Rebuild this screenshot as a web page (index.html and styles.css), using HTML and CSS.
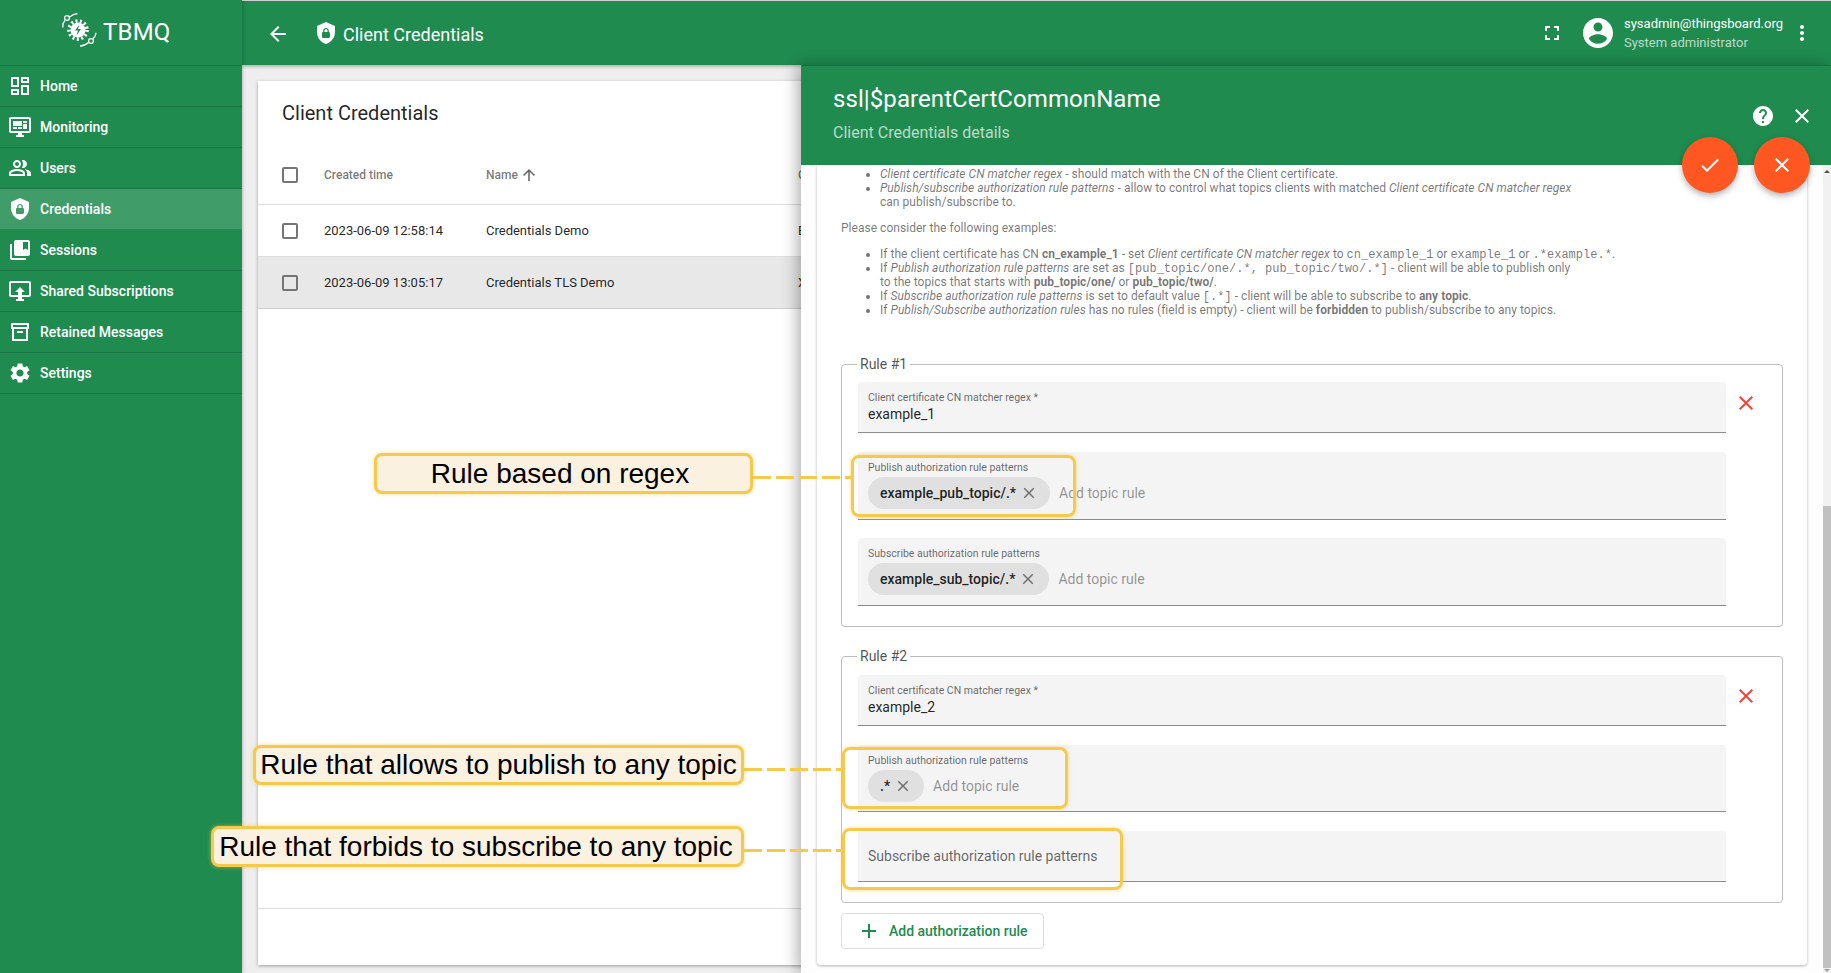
FILE: index.html
```html
<!DOCTYPE html>
<html lang="en">
<head>
    <meta charset="UTF-8">
    <meta name="viewport" content="width=device-width, initial-scale=1.0">
    <title>TBMQ - Client Credentials</title>
    <link rel="stylesheet" href="styles.css">
</head>
<body>
    <aside class="sidebar">
        <div class="logo">
            <svg class="logo-mark" viewBox="0 0 36 36" fill="none" stroke="#fff" stroke-width="1.3">
                <circle cx="5" cy="6" r="2.4"/>
                <circle cx="29" cy="29" r="2.4"/>
                <path d="M3 8.5c-2 2-2.500 4.500-2 7"/>
                <path d="M7.500 5c2.500-2 5-3.200 8-3.500"/>
                <path d="M31 26.800c1.800-1.800 3-3.800 3-6"/>
                <path d="M26.500 30.500c-2.500 2.300-5.500 3.500-8.500 3.500"/>
                <circle cx="16" cy="18" r="7.500" fill="#fff" stroke="none"/>
                <circle cx="16" cy="18" r="9" stroke-width="3.600" stroke-dasharray="2 2.400"/>
                <path d="M17.500 12.500l-4.500 6h3l-1.500 5 4.500-6.500h-3z" fill="#1f8b4f" stroke="none"/>
            </svg>
            <span class="logo-text">TBMQ</span>
        </div>
        <nav>
            <a class="nav-item">
                <svg class="icon" viewBox="0 0 24 24"><path d="M19 5v2h-4V5h4M9 5v6H5V5h4m10 8v6h-4v-6h4M9 17v2H5v-2h4M21 3h-8v6h8V3zM11 3H3v10h8V3zm10 8h-8v10h8V11zm-10 4H3v6h8v-6z"/></svg>
                Home
            </a>
            <a class="nav-item">
                <svg class="icon" viewBox="0 0 24 24"><path d="M21,16V4H3V16H21M21,2A2,2 0 0,1 23,4V16A2,2 0 0,1 21,18H14V20H16V22H8V20H10V18H3C1.89,18 1,17.1 1,16V4C1,2.89 1.89,2 3,2H21M5,6H14V11H5V6M15,6H19V8H15V6M19,9V14H15V9H19M5,12H9V14H5V12M10,12H14V14H10V12Z"/></svg>
                Monitoring
            </a>
            <a class="nav-item">
                <svg class="icon" viewBox="0 0 24 24"><path d="M16.67 13.13C18.04 14.06 19 15.32 19 17v3h4v-3c0-2.18-3.57-3.47-6.33-3.87zM15 12c2.21 0 4-1.79 4-4s-1.79-4-4-4c-.47 0-.91.1-1.33.24C14.5 5.27 15 6.58 15 8s-.5 2.73-1.33 3.76c.42.14.86.24 1.33.24zM9 12c2.21 0 4-1.79 4-4s-1.79-4-4-4-4 1.79-4 4 1.79 4 4 4zm0-6c1.1 0 2 .9 2 2s-.9 2-2 2-2-.9-2-2 .9-2 2-2zM9 13c-2.67 0-8 1.34-8 4v3h16v-3c0-2.66-5.33-4-8-4zm6 5H3v-.99C3.2 16.29 6.3 15 9 15s5.8 1.29 6 2v1z"/></svg>
                Users
            </a>
            <a class="nav-item active">
                <svg class="icon" viewBox="0 0 24 24"><path d="M12,1L3,5V11C3,16.55 6.84,21.74 12,23C17.16,21.74 21,16.55 21,11V5L12,1M12,7C13.4,7 14.8,8.1 14.8,9.5V11C15.4,11 16,11.6 16,12.3V15.8C16,16.4 15.4,17 14.7,17H9.2C8.6,17 8,16.4 8,15.7V12.2C8,11.6 8.6,11 9.2,11V9.5C9.2,8.1 10.6,7 12,7M12,8.2C11.2,8.2 10.5,8.7 10.5,9.5V11H13.5V9.5C13.5,8.7 12.8,8.2 12,8.2Z"/></svg>
                Credentials
            </a>
            <a class="nav-item">
                <svg class="icon" viewBox="0 0 24 24"><path d="M4 6H2v14c0 1.1.9 2 2 2h14v-2H4V6zm16-4H8c-1.1 0-2 .9-2 2v12c0 1.1.9 2 2 2h12c1.1 0 2-.9 2-2V4c0-1.1-.9-2-2-2zm0 10l-2.5-1.5L15 12V4h5v8z"/></svg>
                Sessions
            </a>
            <a class="nav-item">
                <svg class="icon" viewBox="0 0 24 24"><path d="M21 2H3c-1.1 0-2 .9-2 2v12c0 1.1.9 2 2 2h7v2H8v2h8v-2h-2v-2h7c1.1 0 2-.9 2-2V4c0-1.1-.9-2-2-2zm0 14h-7v-3h3l-5-5-5 5h3v3H3V4h18v12z"/></svg>
                Shared Subscriptions
            </a>
            <a class="nav-item">
                <svg class="icon" viewBox="0 0 24 24"><path d="M3 3h18v6h-1v12H4V9H3V3zm2 2v2h14V5H5zm1 4v10h12V9H6zm3 2h6v2H9v-2z"/></svg>
                Retained Messages
            </a>
            <a class="nav-item">
                <svg class="icon" viewBox="0 0 24 24"><path d="M19.14 12.94c.04-.3.06-.61.06-.94 0-.32-.02-.64-.07-.94l2.03-1.58c.18-.14.23-.41.12-.61l-1.92-3.32c-.12-.22-.37-.29-.59-.22l-2.39.96c-.5-.38-1.03-.7-1.62-.94l-.36-2.54c-.04-.24-.24-.41-.48-.41h-3.84c-.24 0-.43.17-.47.41l-.36 2.54c-.59.24-1.13.57-1.62.94l-2.39-.96c-.22-.08-.47 0-.59.22L2.74 8.87c-.12.21-.08.47.12.61l2.03 1.58c-.05.3-.09.63-.09.94s.02.64.07.94l-2.03 1.58c-.18.14-.23.41-.12.61l1.92 3.32c.12.22.37.29.59.22l2.39-.96c.5.38 1.03.7 1.62.94l.36 2.54c.05.24.24.41.48.41h3.84c.24 0 .44-.17.47-.41l.36-2.54c.59-.24 1.13-.56 1.62-.94l2.39.96c.22.08.47 0 .59-.22l1.92-3.32c.12-.22.07-.47-.12-.61l-2.01-1.58zM12 15.6c-1.98 0-3.6-1.62-3.6-3.6s1.62-3.6 3.6-3.6 3.6 1.62 3.6 3.6-1.62 3.6-3.6 3.6z"/></svg>
                Settings
            </a>
        </nav>
    </aside>

    <div class="page">
        <header class="toolbar">
            <svg class="icon back" viewBox="0 0 24 24"><path d="M20 11H7.83l5.59-5.59L12 4l-8 8 8 8 1.41-1.41L7.83 13H20v-2z"/></svg>
            <svg class="icon crumb-icon" viewBox="0 0 24 24"><path d="M12,1L3,5V11C3,16.55 6.84,21.74 12,23C17.16,21.74 21,16.55 21,11V5L12,1M12,7C13.4,7 14.8,8.1 14.8,9.5V11C15.4,11 16,11.6 16,12.3V15.8C16,16.4 15.4,17 14.7,17H9.2C8.6,17 8,16.4 8,15.7V12.2C8,11.6 8.6,11 9.2,11V9.5C9.2,8.1 10.6,7 12,7M12,8.2C11.2,8.2 10.5,8.7 10.5,9.5V11H13.5V9.5C13.5,8.7 12.8,8.2 12,8.2Z"/></svg>
            <span class="crumb">Client Credentials</span>
            <svg class="icon fullscreen" viewBox="0 0 24 24"><path d="M7 14H5v5h5v-2H7v-3zm-2-4h2V7h3V5H5v5zm12 7h-3v2h5v-5h-2v3zM14 5v2h3v3h2V5h-5z"/></svg>
            <svg class="icon avatar" viewBox="0 0 24 24"><path d="M12 2C6.48 2 2 6.48 2 12s4.48 10 10 10 10-4.48 10-10S17.52 2 12 2zm0 3c1.66 0 3 1.34 3 3s-1.34 3-3 3-3-1.34-3-3 1.34-3 3-3zm0 14.2c-2.5 0-4.71-1.28-6-3.22.03-1.99 4-3.08 6-3.08 1.99 0 5.97 1.09 6 3.08-1.29 1.94-3.5 3.22-6 3.22z"/></svg>
            <div class="user">
                <div class="user-mail">sysadmin@thingsboard.org</div>
                <div class="user-role">System administrator</div>
            </div>
            <svg class="icon more" viewBox="0 0 24 24"><path d="M12 8c1.1 0 2-.9 2-2s-.9-2-2-2-2 .9-2 2 .9 2 2 2zm0 2c-1.1 0-2 .9-2 2s.9 2 2 2 2-.9 2-2-.9-2-2-2zm0 6c-1.1 0-2 .9-2 2s.9 2 2 2 2-.9 2-2-.9-2-2-2z"/></svg>
        </header>

        <main class="content">
            <section class="table-card">
                <h2 class="table-title">Client Credentials</h2>
                <div class="row head">
                    <span class="checkbox"></span>
                    <span class="col-time">Created time</span>
                    <span class="col-name">Name
                        <svg class="sort" viewBox="0 0 24 24"><path d="M4 12l1.41 1.41L11 7.83V20h2V7.83l5.58 5.59L20 12l-8-8-8 8z"/></svg>
                    </span>
                    <span class="col-type">Credentials type</span>
                </div>
                <div class="row">
                    <span class="checkbox"></span>
                    <span class="col-time">2023-06-09 12:58:14</span>
                    <span class="col-name">Credentials Demo</span>
                    <span class="col-type">Basic</span>
                </div>
                <div class="row selected">
                    <span class="checkbox"></span>
                    <span class="col-time">2023-06-09 13:05:17</span>
                    <span class="col-name">Credentials TLS Demo</span>
                    <span class="col-type">X.509</span>
                </div>
                <div class="table-footer"></div>
            </section>
        </main>
    </div>

    <!-- details drawer, slides over the table -->
    <section class="drawer">
        <div class="drawer-head">
            <div class="drawer-title">ssl|$parentCertCommonName</div>
            <div class="drawer-sub">Client Credentials details</div>
            <div class="drawer-tools">
                <svg class="icon" viewBox="0 0 24 24"><path d="M12 2C6.48 2 2 6.48 2 12s4.48 10 10 10 10-4.48 10-10S17.52 2 12 2zm1 17h-2v-2h2v2zm2.07-7.75l-.9.92C13.45 12.9 13 13.5 13 15h-2v-.5c0-1.1.45-2.1 1.17-2.83l1.24-1.26c.37-.36.59-.86.59-1.41 0-1.1-.9-2-2-2s-2 .9-2 2H8c0-2.21 1.79-4 4-4s4 1.79 4 4c0 .88-.36 1.68-.93 2.25z"/></svg>
                <svg class="icon" viewBox="0 0 24 24"><path d="M19 6.41L17.59 5 12 10.59 6.41 5 5 6.41 10.59 12 5 17.59 6.41 19 12 13.41 17.59 19 19 17.59 13.41 12z"/></svg>
            </div>
            <div class="fabs">
                <button class="fab"><svg class="icon" viewBox="0 0 24 24"><path d="M9 16.17L4.83 12l-1.42 1.41L9 19 21 7l-1.41-1.41z"/></svg></button>
                <button class="fab"><svg class="icon" viewBox="0 0 24 24"><path d="M19 6.41L17.59 5 12 10.59 6.41 5 5 6.41 10.59 12 5 17.59 6.41 19 12 13.41 17.59 19 19 17.59 13.41 12z"/></svg></button>
            </div>
        </div>

        <div class="drawer-body">
            <div class="details">
                <div class="help">
                    <ul>
                        <li><em>Client certificate CN matcher regex</em> - should match with the CN of the Client certificate.</li>
                        <li><em>Publish/subscribe authorization rule patterns</em> - allow to control what topics clients with matched <em>Client certificate CN matcher regex</em><br>can publish/subscribe to.</li>
                    </ul>
                    <p>Please consider the following examples:</p>
                    <ul>
                        <li>If the client certificate has CN <b>cn_example_1</b> - set <em>Client certificate CN matcher regex</em> to <code>cn_example_1</code> or <code>example_1</code> or <code>.*example.*</code>.</li>
                        <li>If <em>Publish authorization rule patterns</em> are set as <code>[pub_topic/one/.*, pub_topic/two/.*]</code> - client will be able to publish only<br>to the topics that starts with <b>pub_topic/one/</b> or <b>pub_topic/two/</b>.</li>
                        <li>If <em>Subscribe authorization rule patterns</em> is set to default value <code>[.*]</code> - client will be able to subscribe to <b>any topic</b>.</li>
                        <li>If <em>Publish/Subscribe authorization rules</em> has no rules (field is empty) - client will be <b>forbidden</b> to publish/subscribe to any topics.</li>
                    </ul>
                </div>

                <fieldset class="rule first">
                    <legend>Rule #1</legend>
                    <div class="rule-row">
                        <div class="fields">
                            <div class="field">
                                <label>Client certificate CN matcher regex *</label>
                                <div class="value">example_1</div>
                            </div>
                            <div class="field chips">
                                <label>Publish authorization rule patterns</label>
                                <div class="chip-row">
                                    <span class="chip">example_pub_topic/.*<svg viewBox="0 0 24 24"><path d="M19 6.41L17.59 5 12 10.59 6.41 5 5 6.41 10.59 12 5 17.59 6.41 19 12 13.41 17.59 19 19 17.59 13.41 12z"/></svg></span>
                                    <span class="placeholder">Add topic rule</span>
                                </div>
                            </div>
                            <div class="field chips">
                                <label>Subscribe authorization rule patterns</label>
                                <div class="chip-row">
                                    <span class="chip">example_sub_topic/.*<svg viewBox="0 0 24 24"><path d="M19 6.41L17.59 5 12 10.59 6.41 5 5 6.41 10.59 12 5 17.59 6.41 19 12 13.41 17.59 19 19 17.59 13.41 12z"/></svg></span>
                                    <span class="placeholder">Add topic rule</span>
                                </div>
                            </div>
                        </div>
                        <svg class="rule-remove" viewBox="0 0 24 24"><path d="M19 6.41L17.59 5 12 10.59 6.41 5 5 6.41 10.59 12 5 17.59 6.41 19 12 13.41 17.59 19 19 17.59 13.41 12z"/></svg>
                    </div>
                </fieldset>

                <fieldset class="rule">
                    <legend>Rule #2</legend>
                    <div class="rule-row">
                        <div class="fields">
                            <div class="field">
                                <label>Client certificate CN matcher regex *</label>
                                <div class="value">example_2</div>
                            </div>
                            <div class="field chips">
                                <label>Publish authorization rule patterns</label>
                                <div class="chip-row">
                                    <span class="chip">.*<svg viewBox="0 0 24 24"><path d="M19 6.41L17.59 5 12 10.59 6.41 5 5 6.41 10.59 12 5 17.59 6.41 19 12 13.41 17.59 19 19 17.59 13.41 12z"/></svg></span>
                                    <span class="placeholder">Add topic rule</span>
                                </div>
                            </div>
                            <div class="field empty">Subscribe authorization rule patterns</div>
                        </div>
                        <svg class="rule-remove" viewBox="0 0 24 24"><path d="M19 6.41L17.59 5 12 10.59 6.41 5 5 6.41 10.59 12 5 17.59 6.41 19 12 13.41 17.59 19 19 17.59 13.41 12z"/></svg>
                    </div>
                </fieldset>

                <button class="add-rule">
                    <svg viewBox="0 0 24 24"><path d="M19 13h-6v6h-2v-6H5v-2h6V5h2v6h6v2z"/></svg>
                    Add authorization rule
                </button>
            </div>
            <div class="scroll-track"><div class="scroll-thumb"></div></div>
        </div>
    </section>

    <!-- annotations drawn on top of the screenshot -->
    <div class="note note-regex">Rule based on regex</div>
    <div class="dash dash-regex"></div>
    <div class="mark mark-regex"></div>

    <div class="note note-any">Rule that allows to publish to any topic</div>
    <div class="dash dash-any"></div>
    <div class="mark mark-any"></div>

    <div class="note note-none">Rule that forbids to subscribe to any topic</div>
    <div class="dash dash-none"></div>
    <div class="mark mark-none"></div>
</body>
</html>
```

FILE: styles.css
```css
* {
    box-sizing: border-box;
}

html,
body {
    height: 100%;
}

body {
    margin: 0;
    display: flex;
    position: relative;
    overflow: hidden;
    font-family: Roboto, "Liberation Sans", sans-serif;
    background-color: #eeeeee;
    color: rgba(0, 0, 0, 0.87);
}

.icon {
    width: 24px;
    height: 24px;
    flex: none;
    fill: #fff;
}

/* sidebar */
.sidebar {
    width: 242px;
    flex: none;
    background-color: #1f8b4f;
    color: #fff;
    box-shadow: 1px 0 3px rgba(0, 0, 0, 0.2);
    position: relative;
    z-index: 2;
}

.logo {
    height: 66px;
    padding-left: 62px;
    padding-bottom: 5px;
    display: flex;
    align-items: center;
    gap: 5px;
    border-bottom: 1px solid rgba(0, 0, 0, 0.15);
}

.logo-mark {
    width: 36px;
    height: 36px;
}

.logo-text {
    margin-top: 3px;
    font-size: 24px;
    letter-spacing: 0.2px;
}

.nav-item {
    height: 41px;
    padding-left: 8px;
    display: flex;
    align-items: center;
    gap: 8px;
    font-size: 14px;
    font-weight: 500;
    border-bottom: 1px solid rgba(0, 0, 0, 0.15);
}

.nav-item.active {
    background-color: rgba(255, 255, 255, 0.15);
}

/* top bar */
.page {
    flex: 1;
    min-width: 0;
    display: flex;
    flex-direction: column;
}

.toolbar {
    height: 65px;
    flex: none;
    display: flex;
    align-items: center;
    padding-right: 17px;
    background-color: #1f8b4f;
    color: #fff;
    border-top: 1px solid #cfcfcf;
    box-shadow: 0 1px 4px rgba(0, 0, 0, 0.35);
    position: relative;
    z-index: 1;
}

.back {
    margin-left: 24px;
    margin-top: 1px;
}

.crumb-icon {
    margin-left: 24px;
    width: 24px;
    height: 24px;
}

.crumb {
    margin-left: 5px;
    margin-top: 2px;
    font-size: 18px;
    flex: 1;
}

.fullscreen {
    margin-right: 16px;
}

.avatar {
    width: 36px;
    height: 36px;
    margin-right: 8px;
}

.user {
    width: 165px;
    font-size: 13px;
    line-height: 19px;
}

.user-role {
    color: rgba(255, 255, 255, 0.7);
}

.more {
    margin-left: 1px;
}

/* table behind the drawer */
.content {
    flex: 1;
    min-height: 0;
    display: flex;
    padding: 16px 16px 8px;
}

.table-card {
    flex: 1;
    display: flex;
    flex-direction: column;
    background-color: #fff;
    box-shadow: 0 1px 3px rgba(0, 0, 0, 0.35);
}

.table-title {
    margin: 0;
    height: 64px;
    padding-left: 24px;
    font-size: 20px;
    font-weight: 400;
    line-height: 64px;
}

.row {
    height: 52px;
    flex: none;
    display: flex;
    align-items: center;
    padding-left: 24px;
    font-size: 13px;
    border-bottom: 1px solid #dedede;
}

.row.head {
    height: 60px;
    font-size: 12px;
    font-weight: 500;
    color: rgba(0, 0, 0, 0.54);
}

.row.selected {
    background-color: #e8e8e8;
    border-bottom-color: #cfcfcf;
}

.checkbox {
    width: 16px;
    height: 16px;
    flex: none;
    margin-right: 26px;
    border: 2px solid #757575;
    border-radius: 2px;
}

.col-time {
    width: 162px;
    flex: none;
}

.col-name {
    width: 312px;
    flex: none;
    display: flex;
    align-items: center;
    gap: 2px;
}

.col-type {
    white-space: nowrap;
}

.sort {
    width: 18px;
    height: 18px;
    fill: rgba(0, 0, 0, 0.62);
}

.table-footer {
    margin-top: auto;
    height: 57px;
    border-top: 1px solid #dedede;
}

/* drawer */
.drawer {
    position: absolute;
    top: 65px;
    right: 0;
    bottom: 0;
    width: 1030px;
    display: flex;
    flex-direction: column;
    background-color: #fdfdfd;
    box-shadow: -4px 0 14px rgba(0, 0, 0, 0.3);
    z-index: 3;
}

.drawer-head {
    height: 100px;
    flex: none;
    position: relative;
    padding: 19px 32px 0;
    background-color: #1f8b4f;
    color: #fff;
    border-top: 1px solid #1a6f40;
    z-index: 1;
}

.drawer-title {
    font-size: 24px;
    line-height: 28px;
    letter-spacing: 0.08px;
}

.drawer-sub {
    margin-top: 9px;
    font-size: 16px;
    line-height: 22px;
    color: rgba(255, 255, 255, 0.7);
}

.drawer-tools {
    position: absolute;
    top: 38px;
    right: 17px;
    display: flex;
    gap: 15px;
}

.fabs {
    position: absolute;
    top: 71px;
    right: 21px;
    display: flex;
    gap: 16px;
}

.fab {
    width: 56px;
    height: 56px;
    padding: 0;
    display: flex;
    align-items: center;
    justify-content: center;
    border: none;
    border-radius: 50%;
    background-color: #ff5722;
    box-shadow: 0 3px 6px rgba(0, 0, 0, 0.3);
}

.drawer-body {
    flex: 1;
    min-height: 0;
    display: flex;
    overflow: hidden;
    padding-left: 16px;
}

.details {
    width: 990px;
    height: 800px;
    margin-right: 16px;
    padding: 2px 24px 0;
    background-color: #fff;
    border-radius: 0 0 4px 4px;
    box-shadow: 0 1px 3px rgba(0, 0, 0, 0.3);
}

.scroll-track {
    width: 8px;
    flex: none;
    position: relative;
    padding: 341px 0 5px;
    background-color: #f1f1f1;
}

.scroll-track::before,
.scroll-track::after {
    content: "";
    position: absolute;
    left: 1px;
    border-left: 3px solid transparent;
    border-right: 3px solid transparent;
}

.scroll-track::before {
    top: 5px;
    border-bottom: 3px solid #505050;
}

.scroll-track::after {
    bottom: 1px;
    border-top: 3px solid #a0a0a0;
}

.scroll-thumb {
    height: 100%;
    background-color: #c1c1c1;
}

.help {
    height: 187px;
    font-size: 12px;
    line-height: 14px;
    letter-spacing: 0.03px;
    color: rgba(0, 0, 0, 0.55);
}

.help ul {
    margin: 0;
    padding-left: 39px;
}

.help p {
    margin: 12px 0;
}

.help code {
    font-family: "Liberation Mono", monospace;
    line-height: 0;
}

.rule {
    width: 942px;
    min-width: 0;
    margin: 0 0 19px;
    padding: 9px 16px 20px 16px;
    border: 1px solid #bdbdbd;
    border-radius: 4px;
}

.rule.first {
    padding-top: 8px;
}

.rule legend {
    height: 20px;
    margin-left: -1px;
    padding: 0 3px;
    font-size: 14px;
    line-height: 20px;
    color: rgba(0, 0, 0, 0.7);
}

.rule-row {
    display: flex;
}

.fields {
    flex: 1;
    display: flex;
    flex-direction: column;
    gap: 19px;
}

.field {
    height: 51px;
    padding: 10px 9px 0 10px;
    background-color: #f4f4f4;
    border-bottom: 1px solid #8c8c8c;
    border-radius: 4px 4px 0 0;
}

.field.chips {
    height: 67px;
}

/* first rule renders a pixel taller in the reference */
.rule.first .field.chips {
    height: 68px;
}

.rule.first .field.chips:last-child {
    margin-top: -1px;
}

.field label {
    display: block;
    font-size: 10.5px;
    line-height: 12px;
    color: rgba(0, 0, 0, 0.6);
}

.value {
    margin-top: 1px;
    font-size: 14px;
    line-height: 18px;
}

.chip-row {
    margin-top: 3px;
    display: flex;
    align-items: center;
    gap: 9px;
}

.chip {
    height: 32px;
    padding: 0 12px 0 12px;
    display: flex;
    align-items: center;
    gap: 4px;
    border-radius: 16px;
    background-color: #e0e0e0;
    font-size: 14px;
    font-weight: 500;
}

.chip svg {
    width: 18px;
    height: 18px;
    fill: rgba(0, 0, 0, 0.5);
}

.placeholder {
    font-size: 14px;
    color: rgba(0, 0, 0, 0.42);
}

.field.empty {
    padding-top: 17px;
    font-size: 14px;
    color: rgba(0, 0, 0, 0.6);
}

.rule-remove {
    width: 24px;
    height: 24px;
    flex: none;
    margin: 9px 8px 0;
    fill: #f44336;
}

.add-rule {
    width: 203px;
    height: 36px;
    margin-top: -9px;
    display: flex;
    align-items: center;
    gap: 8px;
    padding: 0 0 0 15px;
    border: 1px solid #dedede;
    border-radius: 4px;
    background-color: #fff;
    font-family: inherit;
    font-size: 14px;
    font-weight: 500;
    color: #1f8b4f;
}

.add-rule svg {
    width: 24px;
    height: 24px;
    fill: #1f8b4f;
}

/* annotations */
.note {
    position: absolute;
    z-index: 5;
    display: flex;
    align-items: center;
    justify-content: center;
    font-family: "Liberation Sans", Arial, sans-serif;
    font-size: 28px;
    color: #000;
    white-space: nowrap;
    background-color: #faf1e0;
    border: 3px solid #f5c94c;
    border-radius: 8px;
    box-shadow: 0 0 4px rgba(245, 201, 76, 0.6);
}

.mark {
    position: absolute;
    z-index: 5;
    border: 3px solid #f5c94c;
    border-radius: 8px;
    box-shadow: 0 0 4px rgba(245, 201, 76, 0.6);
}

.dash {
    position: absolute;
    z-index: 5;
    height: 3px;
    background-image: repeating-linear-gradient(90deg, #f5c94c 0, #f5c94c 18px, transparent 18px, transparent 23px);
}

.note-regex {
    left: 374px;
    top: 453px;
    width: 379px;
    height: 41px;
    padding-right: 7px;
}

.dash-regex {
    left: 753px;
    top: 476px;
    width: 98px;
}

.mark-regex {
    left: 851px;
    top: 455px;
    width: 225px;
    height: 62px;
}

.note-any {
    left: 253px;
    top: 745px;
    width: 491px;
    height: 40px;
}

.dash-any {
    left: 744px;
    top: 768px;
    width: 98px;
}

.mark-any {
    left: 842px;
    top: 747px;
    width: 226px;
    height: 62px;
}

.note-none {
    left: 211px;
    top: 826px;
    width: 533px;
    height: 41px;
    padding-right: 3px;
}

.dash-none {
    left: 744px;
    top: 849px;
    width: 98px;
}

.mark-none {
    left: 842px;
    top: 828px;
    width: 281px;
    height: 62px;
}
```
